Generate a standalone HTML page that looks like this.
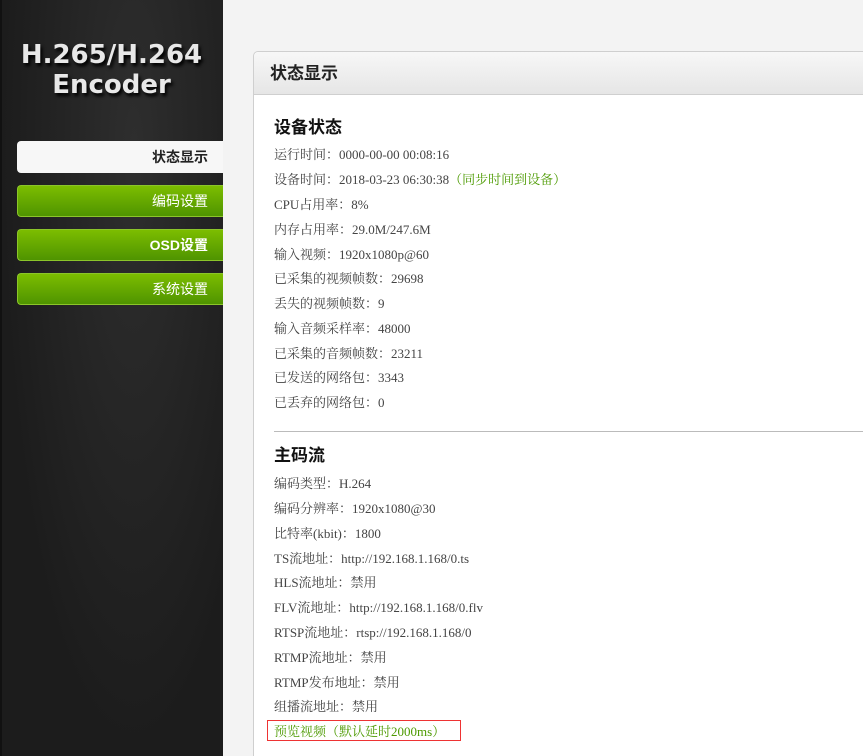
<!DOCTYPE html>
<html style="overflow:hidden"><head><meta charset="utf-8"><style>
html,body{overflow:hidden;height:756px}
body{margin:0;width:863px;background:#f3f3f3;position:relative;font-family:"Liberation Serif","Noto Serif CJK SC",serif;}
#side{position:absolute;left:0;top:0;width:223px;height:756px;background:radial-gradient(ellipse at 60% 20%,#2e2e2e,#1c1c1c 70%);box-shadow:inset 2px 0 0 #111}
#logo{position:absolute;left:0;width:223px;top:40px;text-align:center;color:#e8e8e8;font:bold 26px/30px "DejaVu Sans","Liberation Sans",sans-serif;text-shadow:2px 3px 3px #000}
.btn{position:absolute;left:17px;width:206px;height:32px;border-radius:4px 0 0 4px;box-sizing:border-box;text-align:right;padding-right:15px;font:14px/30px "Liberation Sans","Noto Sans CJK SC",sans-serif;color:#fff;background:linear-gradient(#7cbd00,#4f9400);border:1px solid #8bc52a;border-right:none}
.btn.act{background:#f7f7f7;color:#222;border:none;font-weight:bold;line-height:32px}
#panel{position:absolute;left:253px;top:51px;width:620px;height:720px;background:#fff;border:1px solid #cfcfcf;border-radius:5px 0 0 0}
#ph{height:42px;background:linear-gradient(#f7f7f7,#e6e6e6);border-bottom:1px solid #cfcfcf;font:bold 17px/44px "Liberation Sans","Noto Sans CJK SC",sans-serif;color:#222;padding-left:16px;border-radius:5px 0 0 0}
h3{position:absolute;left:20px;margin:0;font:bold 17px/20px "Liberation Sans","Noto Sans CJK SC",sans-serif;color:#111}
.l{position:absolute;left:20px;font-size:13px;line-height:16px;color:#444;white-space:nowrap}
.g{color:#4c9a00}
</style></head><body>
<div id="side">
<div id="logo">H.265/H.264<br>Encoder</div>
<div class="btn act" style="top:141px">状态显示</div>
<div class="btn" style="top:185px">编码设置</div>
<div class="btn" style="top:229px;font-weight:bold">OSD设置</div>
<div class="btn" style="top:273px">系统设置</div>
</div>
<div id="panel">
<div id="ph">状态显示</div>
<h3 style="top:66px">设备状态</h3>
<div class="l" style="top:95px">运行时间：0000-00-00 00:08:16</div>
<div class="l" style="top:120px">设备时间：2018-03-23 06:30:38<span class="g">（同步时间到设备）</span></div>
<div class="l" style="top:145px">CPU占用率：8%</div>
<div class="l" style="top:170px">内存占用率：29.0M/247.6M</div>
<div class="l" style="top:195px">输入视频：1920x1080p@60</div>
<div class="l" style="top:219px">已采集的视频帧数：29698</div>
<div class="l" style="top:244px">丢失的视频帧数：9</div>
<div class="l" style="top:269px">输入音频采样率：48000</div>
<div class="l" style="top:294px">已采集的音频帧数：23211</div>
<div class="l" style="top:318px">已发送的网络包：3343</div>
<div class="l" style="top:343px">已丢弃的网络包：0</div>
<div style="position:absolute;left:20px;top:379px;width:600px;height:1px;background:#bbb"></div>
<h3 style="top:394px">主码流</h3>
<div class="l" style="top:424px">编码类型：H.264</div>
<div class="l" style="top:449px">编码分辨率：1920x1080@30</div>
<div class="l" style="top:474px">比特率(kbit)：1800</div>
<div class="l" style="top:499px">TS流地址：http://192.168.1.168/0.ts</div>
<div class="l" style="top:523px">HLS流地址：禁用</div>
<div class="l" style="top:548px">FLV流地址：http://192.168.1.168/0.flv</div>
<div class="l" style="top:573px">RTSP流地址：rtsp://192.168.1.168/0</div>
<div class="l" style="top:598px">RTMP流地址：禁用</div>
<div class="l" style="top:623px">RTMP发布地址：禁用</div>
<div class="l" style="top:647px">组播流地址：禁用</div>
<div style="position:absolute;left:13px;top:668px;width:194px;height:21px;border:1px solid #e33;box-sizing:border-box"></div>
<div class="l g" style="top:672px">预览视频（默认延时2000ms）</div>
</div>
</body></html>
